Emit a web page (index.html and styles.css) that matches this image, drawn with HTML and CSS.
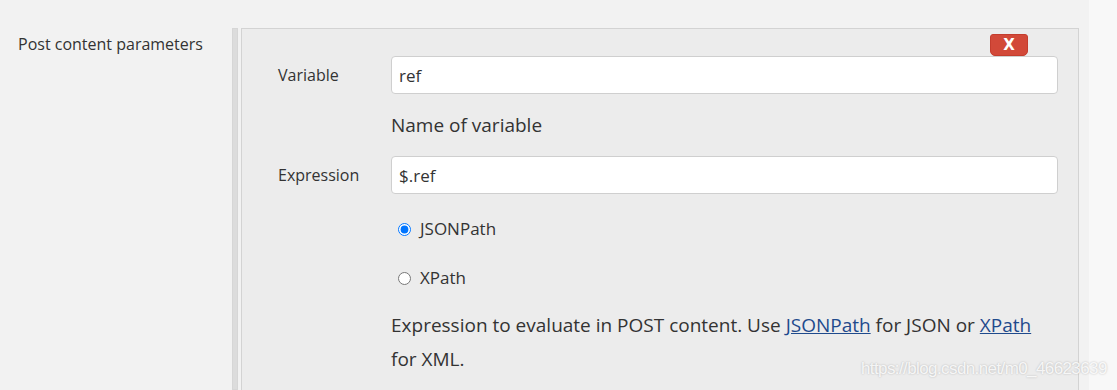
FILE: index.html
```html
<!DOCTYPE html>
<html lang="en">
<head>
    <meta charset="UTF-8">
    <title>Post content parameters</title>
    <link rel="stylesheet" href="styles.css">
</head>
<body>
    <div class="page">
        <div class="row-label">Post content parameters</div>
        <div class="gutter"></div>
        <div class="panel">
            <div class="panel-top">
                <button class="delete-btn">X</button>
            </div>
            <div class="form-grid">
                <label class="field-label" for="variable">Variable</label>
                <input class="text-input" type="text" id="variable" value="ref">

                <div></div>
                <div class="help help-short">Name of variable</div>

                <label class="field-label" for="expression">Expression</label>
                <input class="text-input" type="text" id="expression" value="$.ref">

                <div></div>
                <div class="radio-list">
                    <label class="radio-row"><input type="radio" name="type" checked> JSONPath</label>
                    <label class="radio-row"><input type="radio" name="type"> XPath</label>
                </div>

                <div></div>
                <div class="help help-long">Expression to evaluate in POST content. Use <a href="#">JSONPath</a> for JSON or <a href="#">XPath</a> for XML.</div>
            </div>
        </div>
        <div class="side-strip"></div>
    </div>
    <div class="watermark">https://blog.csdn.net/m0_46623639</div>
</body>
</html>
```

FILE: styles.css
```css
* {
    margin: 0;
    padding: 0;
    box-sizing: border-box;
}

body {
    font-family: "Open Sans", "Noto Sans", sans-serif;
    background: #f2f2f2;
    color: #333;
    height: 390px;
    overflow: hidden;
}

.page {
    display: flex;
    height: 390px;
}

.row-label {
    width: 232px;
    padding: 33px 0 0 18px;
    font-size: 16px;
    color: #333;
}

.gutter {
    width: 6px;
    margin-top: 28px;
    background: #dcdcdc;
    border: 1px solid #d6d6d6;
}

.panel {
    width: 838px;
    margin: 28px 0 0 3px;
    background: #ececec;
    border: 1px solid #d3d3d3;
    border-bottom: none;
    padding: 0 20px 0 36px;
}

.panel-top {
    display: flex;
    justify-content: flex-end;
    padding: 5px 30px 0 0;
    height: 27px;
}

.delete-btn {
    width: 38px;
    height: 22px;
    background: #d24939;
    border: 1px solid #c43d2e;
    border-radius: 3px 3px 5px 5px;
    color: #fff;
    font-family: "DejaVu Sans", sans-serif;
    font-weight: bold;
    font-size: 15px;
    line-height: 20px;
    text-align: center;
}

.form-grid {
    display: grid;
    grid-template-columns: 113px 1fr;
    align-items: center;
}

.field-label {
    font-size: 16px;
}

.text-input {
    height: 38px;
    width: 100%;
    background: #fff;
    border: 1px solid #cfcfcf;
    border-radius: 4px;
    padding: 0 7px;
    font-family: "Open Sans", "Noto Sans", sans-serif;
    font-size: 17px;
    color: #333;
}

.help {
    font-size: 19px;
    line-height: 34px;
}

.help-short {
    margin: 14px 0;
}

.help-long {
    margin-top: 6px;
    padding-right: 20px;
}

.help a {
    color: #1f4a8c;
}

.radio-list {
    margin-top: 10px;
}

.radio-row {
    display: flex;
    align-items: center;
    height: 49px;
    font-size: 17px;
}

.radio-row input {
    width: 13px;
    height: 13px;
    margin: 2px 9px 0 7px;
}

.side-strip {
    flex: 1;
    margin-left: 10px;
    background: #f8f8f8;
}

.watermark {
    position: absolute;
    left: 861px;
    top: 359px;
    font-family: "Liberation Sans", sans-serif;
    font-size: 17px;
    letter-spacing: -0.6px;
    color: rgba(255, 255, 255, 0.85);
    text-shadow: 0 0 2px rgba(0, 0, 0, 0.25);
}
```
